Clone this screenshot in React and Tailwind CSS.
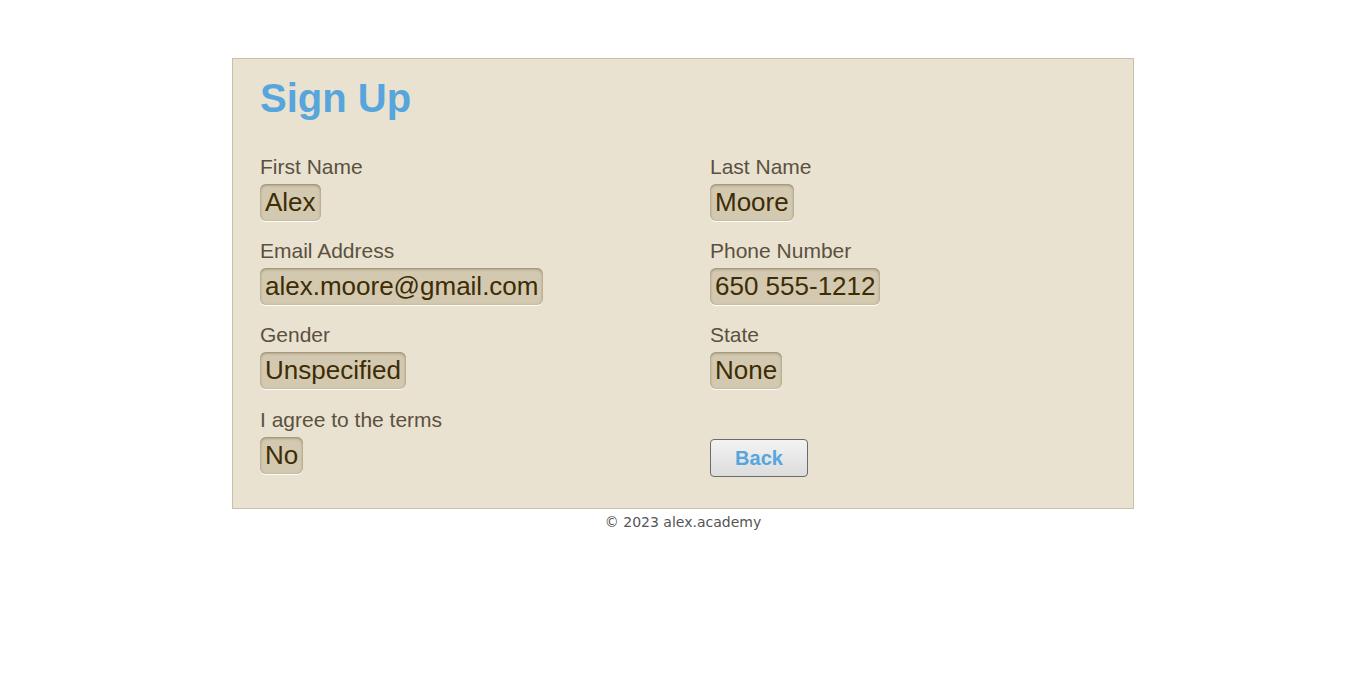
import React from 'react';

const FIELDS = [
  ['First Name', 'Alex', 'Last Name', 'Moore'],
  ['Email Address', 'alex.moore@gmail.com', 'Phone Number', '650 555-1212'],
  ['Gender', 'Unspecified', 'State', 'None'],
];

function Field({ label, value }) {
  return (
    <div className="flex flex-col items-start">
      <div className="text-[21px] leading-[24px] text-[#5b5140] mb-[5px]">{label}</div>
      <div className="rounded-[6px] bg-[#d3c9b0] px-[5px] py-[3px] text-[26px] leading-[31px] text-[#3d2c04] shadow-[inset_0_1px_3px_rgba(60,40,0,0.45),0_1px_0_rgba(255,255,255,0.9)]">
        {value}
      </div>
    </div>
  );
}

export default function App() {
  return (
    <div className="min-h-screen bg-white font-['Liberation_Sans',Arial,sans-serif]">
      <div className="pt-[58px] flex flex-col items-center">
        {/* Card */}
        <div className="w-[902px] border border-[#c9c0aa] bg-[#e9e2d1] pl-[27px] pt-[16px] pb-[31px]">
          <h1 className="text-[40px] leading-[46px] font-bold text-[#56a6dd]">Sign Up</h1>

          <div className="mt-[34px] grid grid-cols-[450px_1fr] gap-y-[18px]">
            {FIELDS.map(([l1, v1, l2, v2]) => (
              <React.Fragment key={l1}>
                <Field label={l1} value={v1} />
                <Field label={l2} value={v2} />
              </React.Fragment>
            ))}
            <div className="pt-[1px]">
              <Field label="I agree to the terms" value="No" />
            </div>
            <div className="pt-[32px]">
              <button className="w-[98px] h-[38px] rounded-[4px] border border-[#6b6b6b] bg-gradient-to-b from-[#f3f3f3] to-[#dcdcdc] text-[20px] font-bold text-[#56a6dd]">
                Back
              </button>
            </div>
          </div>
        </div>

        {/* Footer */}
        <div className="mt-[4px] font-['DejaVu_Sans',Verdana,sans-serif] text-[14px] leading-[18px] text-[#555]">
          © 2023 alex.academy
        </div>
      </div>
    </div>
  );
}
